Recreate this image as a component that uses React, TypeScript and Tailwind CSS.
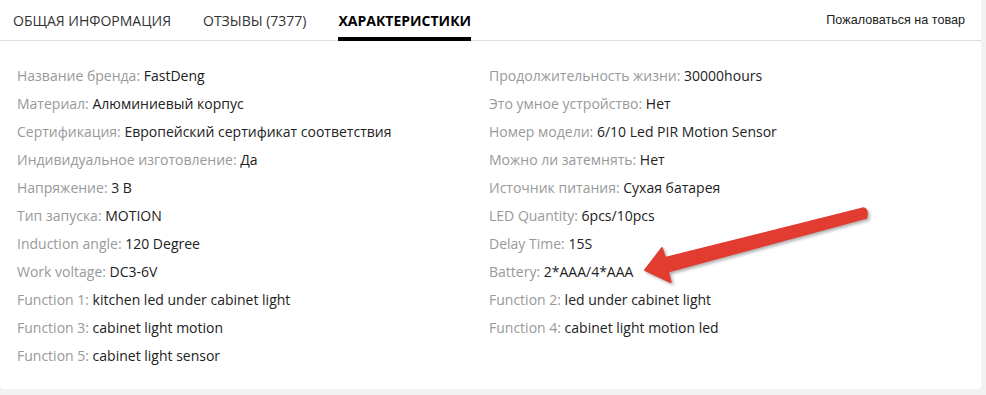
const left: [string, string][] = [
  ["Название бренда", "FastDeng"],
  ["Материал", "Алюминиевый корпус"],
  ["Сертификация", "Европейский сертификат соответствия"],
  ["Индивидуальное изготовление", "Да"],
  ["Напряжение", "3 В"],
  ["Тип запуска", "MOTION"],
  ["Induction angle", "120 Degree"],
  ["Work voltage", "DC3-6V"],
  ["Function 1", "kitchen led under cabinet light"],
  ["Function 3", "cabinet light motion"],
  ["Function 5", "cabinet light sensor"],
];

const right: [string, string][] = [
  ["Продолжительность жизни", "30000hours"],
  ["Это умное устройство", "Нет"],
  ["Номер модели", "6/10 Led PIR Motion Sensor"],
  ["Можно ли затемнять", "Нет"],
  ["Источник питания", "Сухая батарея"],
  ["LED Quantity", "6pcs/10pcs"],
  ["Delay Time", "15S"],
  ["Battery", "2*AAA/4*AAA"],
  ["Function 2", "led under cabinet light"],
  ["Function 4", "cabinet light motion led"],
];

function Prop({ name, value }: { name: string; value: string }) {
  return (
    <div className="h-[28px] leading-[28px] whitespace-nowrap">
      <span className="text-[#999]">{name}: </span>
      <span className="text-[#222]">{value}</span>
    </div>
  );
}

export default function App() {
  return (
    <div className="w-[986px] h-[395px] bg-[#f2f2f2] font-['Open_Sans',sans-serif] text-[14px]">
      <div className="relative w-[981px] h-[389px] bg-white rounded-b-[4px]">
        {/* Tabs */}
        <div className="h-[41px] flex items-stretch justify-between border-b border-[#ddd]">
          <div className="flex items-stretch pl-[13px] gap-[32px] uppercase">
            <div className="flex items-center text-[#333]">Общая информация</div>
            <div className="flex items-center text-[#333]">Отзывы (7377)</div>
            <div className="relative flex items-center font-bold text-black">
              Характеристики
              <span className="absolute left-0 right-0 -bottom-[1px] h-[4px] bg-black" />
            </div>
          </div>
          <a className="flex items-center pr-[16px] text-[12.6px] text-[#222] font-['Liberation_Sans',Arial,sans-serif]">
            Пожаловаться на товар
          </a>
        </div>

        {/* Specs */}
        <div className="grid grid-cols-[472px_1fr] pl-[17px] pt-[21px]">
          <div>
            {left.map(([n, v]) => (
              <Prop key={n} name={n} value={v} />
            ))}
          </div>
          <div>
            {right.map(([n, v]) => (
              <Prop key={n} name={n} value={v} />
            ))}
          </div>
        </div>

        {/* red arrow annotation */}
        <svg
          className="absolute left-0 top-0 pointer-events-none"
          width="981"
          height="389"
          style={{ filter: "drop-shadow(2px 2px 1.5px rgba(0,0,0,0.3))" }}
        >
          <path
            d="M645 270 L662 248 L665 258 L863.7 208.2 Q868 209 866.3 217.8 L668 271.5 L670.6 282 Z"
            fill="#e23c31"
            stroke="#e23c31"
            strokeLinejoin="round"
            strokeWidth="2"
          />
        </svg>
      </div>
    </div>
  );
}
